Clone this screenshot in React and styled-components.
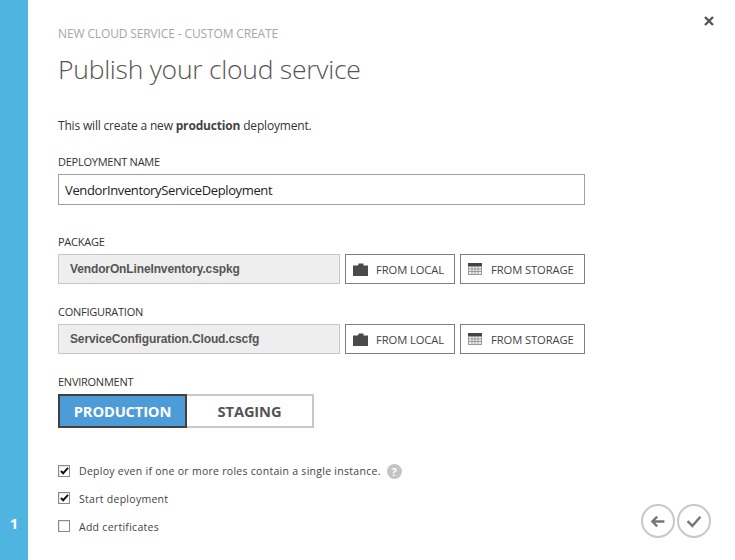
import styled, { createGlobalStyle } from "styled-components";

const GlobalStyle = createGlobalStyle`
    html, body {
        margin: 0;
        padding: 0;
        background: #fff;
    }

    body {
        font-family: "Open Sans", "Noto Sans", Arial, sans-serif;
        color: #333;
    }
`

const FolderIcon = () => (
    <svg width="15" height="13" viewBox="0 0 15 13">
        <path fill="#4a4a4a" d="M0 2.5h4.5L5.5 1.5V.5h5v2H15V13H0z" />
    </svg>
)

const TableIcon = () => (
    <svg width="14" height="12" viewBox="0 0 14 12">
        <rect width="14" height="12" fill="#9a9a9a" />
        <rect width="14" height="3" fill="#444" />
        <path
            fill="#f1f1f1"
            d="M1 4h2.5v1.5H1zM4.5 4h2v1.5h-2zM7.5 4h2v1.5h-2zM10.500 4H13v1.500h-2.500zM1 6.500h2.500V8H1zM4.500 6.500h2V8h-2zM7.500 6.500h2V8h-2zM10.500 6.500H13V8h-2.500zM1 9h2.500v2H1zM4.500 9h2v2h-2zM7.500 9h2v2h-2zM10.500 9H13v2h-2.500z"
        />
    </svg>
)

const SourceButtons = () => (
    <>
        <SourceButton $width={110} $gap={8}>
            <FolderIcon />
            <span>FROM LOCAL</span>
        </SourceButton>
        <SourceButton $width={125} $gap={9}>
            <TableIcon />
            <span>FROM STORAGE</span>
        </SourceButton>
    </>
)

const CheckOption = ({ checked, label, help, raised }) => (
    <OptionRow>
        <CheckBox $raised={raised}>
            {checked && (
                <svg width="9" height="8" viewBox="0 0 10 9">
                    <path d="M1 4.500l2.500 2.500L9 1" fill="none" stroke="#111" strokeWidth="2.200" />
                </svg>
            )}
        </CheckBox>
        <OptionLabel>{label}</OptionLabel>
        {help && <HelpBadge>?</HelpBadge>}
    </OptionRow>
)

export default function App() {
    return (
        <Page>
            <GlobalStyle />
            <Sidebar>
                <StepNumber>1</StepNumber>
            </Sidebar>
            <Main>
                <Header>
                    <div>
                        <Breadcrumb>NEW CLOUD SERVICE - CUSTOM CREATE</Breadcrumb>
                        <Title>Publish your cloud service</Title>
                    </div>
                    <CloseButton>
                        <svg width="10" height="10" viewBox="0 0 10 10">
                            <path d="M1 1l8 8M9 1l-8 8" stroke="#555" strokeWidth="2.400" />
                        </svg>
                    </CloseButton>
                </Header>

                <Intro>This will create a new <strong>production</strong> deployment.</Intro>

                <FieldLabel $top={19}>DEPLOYMENT NAME</FieldLabel>
                <NameInput>VendorInventoryServiceDeployment</NameInput>

                <FieldLabel $top={29}>PACKAGE</FieldLabel>
                <FileRow>
                    <FileName>VendorOnLineInventory.cspkg</FileName>
                    <SourceButtons />
                </FileRow>

                <FieldLabel $top={20}>CONFIGURATION</FieldLabel>
                <FileRow>
                    <FileName>ServiceConfiguration.Cloud.cscfg</FileName>
                    <SourceButtons />
                </FileRow>

                <FieldLabel $top={20}>ENVIRONMENT</FieldLabel>
                <Toggle>
                    <ToggleItem $active>PRODUCTION</ToggleItem>
                    <ToggleItem>STAGING</ToggleItem>
                </Toggle>

                <Footer>
                    <Options>
                        <CheckOption checked help label="Deploy even if one or more roles contain a single instance." />
                        <CheckOption checked raised label="Start deployment" />
                        <CheckOption raised label="Add certificates" />
                    </Options>
                    <NavButtons>
                        <NavButton>
                            <svg viewBox="0 0 20 16">
                                <path d="M9 2L3 8l6 6M3.500 8H18" fill="none" stroke="#777" strokeWidth="3" />
                            </svg>
                        </NavButton>
                        <NavButton>
                            <svg viewBox="0 0 20 16">
                                <path d="M2 7.500L8 13.500 18 2" fill="none" stroke="#777" strokeWidth="3" />
                            </svg>
                        </NavButton>
                    </NavButtons>
                </Footer>
            </Main>
        </Page>
    )
}

const Page = styled.div`
    width: 735px;
    height: 560px;
    display: flex;
    overflow: hidden;
    background: #fff;
`

const Sidebar = styled.aside`
    width: 28px;
    flex-shrink: 0;
    display: flex;
    flex-direction: column;
    justify-content: flex-end;
    align-items: center;
    background: #50b4e1;
`

const StepNumber = styled.div`
    margin-bottom: 27px;
    font-size: 15px;
    font-weight: 700;
    line-height: 20px;
    color: #fff;
`

const Main = styled.main`
    flex: 1;
    min-width: 0;
    display: flex;
    flex-direction: column;
    padding-left: 30px;
`

const Header = styled.header`
    display: flex;
    justify-content: space-between;
    align-items: flex-start;
    padding-top: 25px;
`

const Breadcrumb = styled.div`
    font-size: 12px;
    line-height: 17px;
    letter-spacing: -0.130px;
    color: #a6a6a6;
`

const Title = styled.h1`
    margin: 8px 0 0;
    font-size: 26.500px;
    font-weight: 300;
    line-height: 38px;
    letter-spacing: -0.260px;
    color: #555;
`

const CloseButton = styled.div`
    display: flex;
    margin: -9px 21px 0 0;
`

const Intro = styled.p`
    margin: 29px 0 0;
    font-size: 12px;
    line-height: 18px;
    letter-spacing: -0.180px;
    color: #333;

    strong {
        font-weight: 700;
        color: #444;
    }
`

const FieldLabel = styled.div`
    margin-top: ${({ $top }) => $top}px;
    font-size: 11px;
    line-height: 16px;
    letter-spacing: -0.250px;
    color: #333;
`

const NameInput = styled.div`
    box-sizing: border-box;
    width: 527px;
    height: 31px;
    margin-top: 4px;
    padding-left: 6px;
    border: 1px solid #a0a0a0;
    font-size: 13px;
    line-height: 30px;
    letter-spacing: -0.370px;
    color: #222;
`

const FileRow = styled.div`
    display: flex;
    gap: 5px;
    margin-top: 4px;
`

const FileName = styled.div`
    box-sizing: border-box;
    width: 282px;
    height: 30px;
    padding-left: 11px;
    border: 1px solid #c8c8c8;
    background: #eee;
    font-family: "Liberation Sans", Arial, sans-serif;
    font-size: 12px;
    font-weight: 700;
    line-height: 28px;
    letter-spacing: -0.130px;
    color: #555;
`

const SourceButton = styled.div`
    box-sizing: border-box;
    width: ${({ $width }) => $width}px;
    height: 30px;
    display: flex;
    align-items: center;
    gap: ${({ $gap }) => $gap}px;
    padding-left: 7px;
    border: 1px solid #7f7f7f;
    font-size: 11.200px;
    letter-spacing: -0.080px;
    color: #444;
`

const Toggle = styled.div`
    display: flex;
    margin-top: 4px;
`

const ToggleItem = styled.div`
    box-sizing: border-box;
    height: 34px;
    display: flex;
    align-items: center;
    justify-content: center;
    width: ${({ $active }) => ($active ? 129 : 127)}px;
    border: 2px solid ${({ $active }) => ($active ? "#404040" : "#c8c8c8")};
    border-left-width: ${({ $active }) => ($active ? 2 : 0)}px;
    background: ${({ $active }) => ($active ? "#4d9cd8" : "#fff")};
    font-size: 14.700px;
    font-weight: 700;
    letter-spacing: -0.150px;
    color: ${({ $active }) => ($active ? "#fff" : "#555")};
`

const Footer = styled.div`
    flex: 1;
    display: flex;
    justify-content: space-between;
    align-items: flex-end;
    padding: 0 24px 22px 0;
`

const Options = styled.div`
    display: flex;
    flex-direction: column;
    gap: 10px;
    padding-bottom: 2px;
`

const OptionRow = styled.label`
    height: 18px;
    display: flex;
    align-items: center;
`

const CheckBox = styled.span`
    box-sizing: border-box;
    width: 12px;
    height: 12px;
    margin-bottom: ${({ $raised }) => ($raised ? 3 : 0)}px;
    display: flex;
    align-items: center;
    justify-content: center;
    border: 1px solid #8a8a8a;
    background: #fff;
    box-shadow: inset 1px 1px 0 #e6e6e6;
`

const OptionLabel = styled.span`
    margin-left: 9px;
    font-size: 10.500px;
    letter-spacing: 0.280px;
    color: #444;
`

const HelpBadge = styled.span`
    width: 15px;
    height: 15px;
    margin-left: 6px;
    display: flex;
    align-items: center;
    justify-content: center;
    border-radius: 50%;
    background: #c4c4c4;
    font-size: 11px;
    font-weight: 700;
    color: #fff;
`

const NavButtons = styled.div`
    display: flex;
    gap: 2px;
`

const NavButton = styled.div`
    box-sizing: border-box;
    width: 34px;
    height: 34px;
    display: flex;
    align-items: center;
    justify-content: center;
    border: 2px solid #c8c8c8;
    border-radius: 50%;

    svg {
        width: 16px;
        height: 13px;
    }
`
